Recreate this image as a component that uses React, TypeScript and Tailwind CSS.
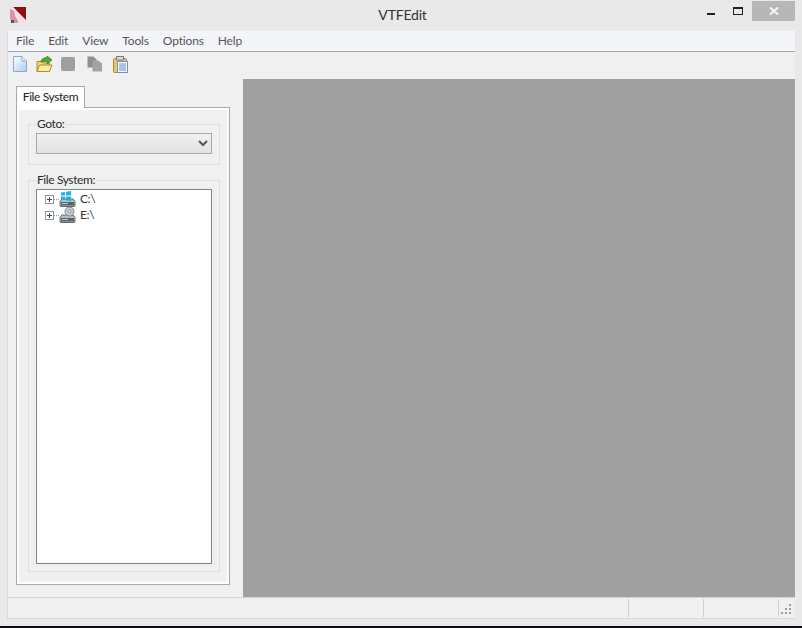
import React from "react";

const font = { fontFamily: 'Lato, "Liberation Sans", sans-serif' };

const AppIcon = () => (
  <svg width="16" height="16" viewBox="0 0 16 16">
    <rect width="16" height="16" fill="#f3e3e6" />
    <polygon points="3,0 16,0 16,13" fill="#8a0f14" />
    <polygon points="0,0 3,0 10,8 13,16 6,16 3,10 0,9" fill="#f7dfe2" />
    <polygon points="0,2 4,4 5,9 8,14 8,16 2,16 0,12" fill="#d894a6" />
    <rect x="1" y="13" width="3" height="3" fill="#555" />
  </svg>
);

const NewIcon = () => (
  <svg width="16" height="18" viewBox="0 0 16 18">
    <defs>
      <linearGradient id="pg" x1="0" y1="0" x2="1" y2="1">
        <stop offset="0" stopColor="#ffffff" />
        <stop offset="1" stopColor="#a9cdf0" />
      </linearGradient>
    </defs>
    <path d="M1.500 1.500h8.500l4.500 4.500v10.500h-13z" fill="url(#pg)" stroke="#8fa9c9" />
    <path d="M10 1.500v4.500h4.500" fill="#e8f1fb" stroke="#8fa9c9" />
  </svg>
);

const OpenIcon = () => (
  <svg width="17" height="17" viewBox="0 0 17 17">
    <path d="M1 5.500h5l1.500 1.500h6v8.500h-12.500z" fill="#f3d67b" stroke="#b08a2c" />
    <path d="M1 15.500l2.500-6.500h12.500l-2.500 6.500z" fill="#fbe9a6" stroke="#b08a2c" />
    <path d="M5 6c0-3 3-4.500 6-4.200v-1.800l5 3.800-4.500 4.200v-2.400c-2.500-.3-4.500 0-6.500.4z" fill="#4fae2d" stroke="#2b7a14" strokeWidth="0.7" />
  </svg>
);

const SaveIcon = () => <div className="w-[14px] h-[14px] rounded-[2px] bg-[#a0a0a0]" />;

const CopyIcon = () => (
  <svg width="16" height="16" viewBox="0 0 16 16">
    <path d="M0.500 0.500h6l3 3v8h-9z" fill="#8f8f8f" />
    <path d="M5.500 4.500h6l3.500 3v8h-9.500z" fill="#a3a3a3" />
  </svg>
);

const PasteIcon = () => (
  <svg width="15" height="17" viewBox="0 0 15 17">
    <rect x="0.500" y="2.500" width="13" height="14" rx="1" fill="#eac766" stroke="#a98a32" />
    <rect x="3.500" y="0.500" width="7" height="3.500" fill="#d9d9d9" stroke="#7d7d7d" />
    <rect x="4.500" y="5.500" width="10" height="11" fill="#f6fafe" stroke="#6e93bf" />
    <path d="M6 8h7M6 10h7M6 12h7M6 14h7" stroke="#5f8fc8" />
  </svg>
);

const Expander = () => (
  <div className="w-[9px] h-[9px] border border-[#8e9aa6] bg-white flex items-center justify-center">
    <svg width="7" height="7" viewBox="0 0 7 7">
      <path d="M1 3.500h5M3.500 1v5" stroke="#4a4a4a" />
    </svg>
  </div>
);

const DriveBase = () => (
  <>
    <path d="M1 10.500l2-2.500h11l2 2.500v4a1 1 0 0 1-1 1h-13a1 1 0 0 1-1-1z" fill="#b9bfc4" stroke="#5f666c" />
    <rect x="2" y="11" width="13" height="3.500" fill="#59636b" />
    <rect x="3" y="12" width="6" height="1" fill="#a9d5df" />
  </>
);

const WinDrive = () => (
  <svg width="17" height="16" viewBox="0 0 17 16">
    <DriveBase />
    <path d="M2 1.500l4-.6v3.600h-4zM7 .8l5-.8v4.500h-5zM2 5.500h4v3.600l-4-.6zM7 5.500h5v4.500l-5-.8z" fill="#22b0e6" />
  </svg>
);

const DiscDrive = () => (
  <svg width="17" height="16" viewBox="0 0 17 16">
    <DriveBase />
    <circle cx="10.500" cy="4.500" r="4.500" fill="#c9ced2" stroke="#7c858b" />
    <circle cx="10.500" cy="4.500" r="1.500" fill="#f4f6f7" stroke="#7c858b" />
  </svg>
);

const TreeRow = ({ icon, label }: { icon: React.ReactNode; label: string }) => (
  <div className="flex items-center h-4">
    <div className="ml-[8px]">
      <Expander />
    </div>
    <div className="w-[5px] border-t border-dotted border-[#9a9a9a]" />
    {icon}
    <span className="ml-[4px]">{label}</span>
  </div>
);

const GroupBox = ({ label, className, children }: { label: string; className: string; children: React.ReactNode }) => (
  <div className={`relative border border-[#dfdfdf] ${className}`}>
    <span className="absolute -top-[9px] left-[7px] bg-[#f0f0f0] px-[1px] leading-4">{label}</span>
    {children}
  </div>
);

const GripDots = () => (
  <svg width="12" height="12" viewBox="0 0 12 12" className="self-end mb-[2px] mr-[2px]">
    <path d="M8 1h2v2h-2zM4 5h2v2h-2zM8 5h2v2h-2zM0 9h2v2h-2zM4 9h2v2h-2zM8 9h2v2h-2z" fill="#9c9c9c" />
  </svg>
);

export default function App() {
  return (
    <div style={font} className="w-[802px] h-[628px] flex flex-col overflow-hidden bg-[#e9e9e9] text-[12px] tracking-[-0.4px] text-[#2b2b2b]">
      {/* title bar */}
      <div className="h-[31px] shrink-0 flex items-start">
        <div className="flex-1 pl-[10px] pt-[7px]">
          <AppIcon />
        </div>
        <div className="text-[14px] tracking-[-0.2px] leading-[30px] text-[#333]">VTFEdit</div>
        <div className="flex-1 flex justify-end pr-[7px] items-start">
          <div className="mt-[13px] mr-[18px] w-[8px] h-[2px] bg-[#222]" />
          <div className="mt-[7px] mr-[9px] w-[10px] h-[8px] border border-[#222] border-t-2" />
          <div className="mt-[1px] w-[43px] h-[20px] bg-[#b7b7b7] flex items-center justify-center">
            <svg width="10" height="8" viewBox="0 0 10 8">
              <path d="M1 0.500l8 7M9 0.500l-8 7" stroke="#f4f4f4" strokeWidth="2" />
            </svg>
          </div>
        </div>
      </div>

      <div className="flex-1 ml-[7px] mr-[7px] border-l border-[#d8d8d8] flex flex-col min-h-0">
        {/* menu */}
        <div className="h-[21px] shrink-0 bg-[#f4f5f8] border-b border-[#a8a8a8] flex items-center pl-[8px] gap-[14px] tracking-[-0.15px] text-[#555]">
          <span>File</span>
          <span>Edit</span>
          <span>View</span>
          <span>Tools</span>
          <span>Options</span>
          <span>Help</span>
        </div>

        {/* toolbar */}
        <div className="h-[27px] shrink-0 bg-[#f0f0f0] flex items-center pb-[3px]">
          <div className="w-[24px] flex justify-center"><NewIcon /></div>
          <div className="w-[24px] flex justify-center"><OpenIcon /></div>
          <div className="w-[24px] flex justify-center"><SaveIcon /></div>
          <div className="w-[30px] flex justify-center"><CopyIcon /></div>
          <div className="w-[20px] flex justify-center"><PasteIcon /></div>
        </div>

        <div className="flex-1 flex min-h-0 bg-[#f0f0f0]">
          {/* left panel */}
          <div className="w-[235px] shrink-0 pt-[7px] pl-[8px] pr-[13px] pb-[12px] flex flex-col">
            <div className="h-[22px] w-[69px] shrink-0 bg-white border border-b-0 border-[#a9a9a9] text-center leading-[20px] text-[#222] relative z-10 -mb-[1px]">
              File System
            </div>
            <div className="flex-1 border border-[#a9a9a9] p-[2px] bg-white flex min-h-0">
              <div className="flex-1 bg-[#f0f0f0] pl-[9px] pr-[7px] pt-[14px] pb-[10px] flex flex-col min-w-0">
                <GroupBox label="Goto:" className="h-[41px] px-[7px] pt-[8px] shrink-0">
                  <div className="h-[21px] border border-[#a9a9a9] bg-gradient-to-b from-[#f0f0f0] to-[#e2e2e2] flex items-center justify-end pr-[3px]">
                    <svg width="10" height="7" viewBox="0 0 10 7">
                      <path d="M1 1l4 4 4-4" fill="none" stroke="#555" strokeWidth="2" />
                    </svg>
                  </div>
                </GroupBox>
                <GroupBox label="File System:" className="flex-1 mt-[15px] px-[7px] pt-[8px] pb-[7px] flex flex-col min-h-0">
                  <div className="flex-1 border border-[#828282] bg-white pt-[1px] text-[#333]">
                    <TreeRow icon={<WinDrive />} label="C:\" />
                    <TreeRow icon={<DiscDrive />} label="E:\" />
                  </div>
                </GroupBox>
              </div>
            </div>
          </div>

          {/* document area */}
          <div className="flex-1 bg-[#a0a0a0]" />
        </div>

        {/* status bar */}
        <div className="h-[22px] shrink-0 bg-[#f0f0f0] border-t border-[#d4d4d4] border-b border-b-[#d8d8d8] flex justify-end">
          <div className="w-[75px] border-l border-[#d0d0d0] my-[1px]" />
          <div className="w-[75px] border-l border-[#d0d0d0] my-[1px]" />
          <div className="w-[17px] border-l border-[#d0d0d0] my-[1px] flex justify-end">
            <GripDots />
          </div>
        </div>
      </div>

      <div className="h-[7px] shrink-0" />
      <div className="h-[2px] shrink-0 bg-[#0c0c10]" />
    </div>
  );
}
